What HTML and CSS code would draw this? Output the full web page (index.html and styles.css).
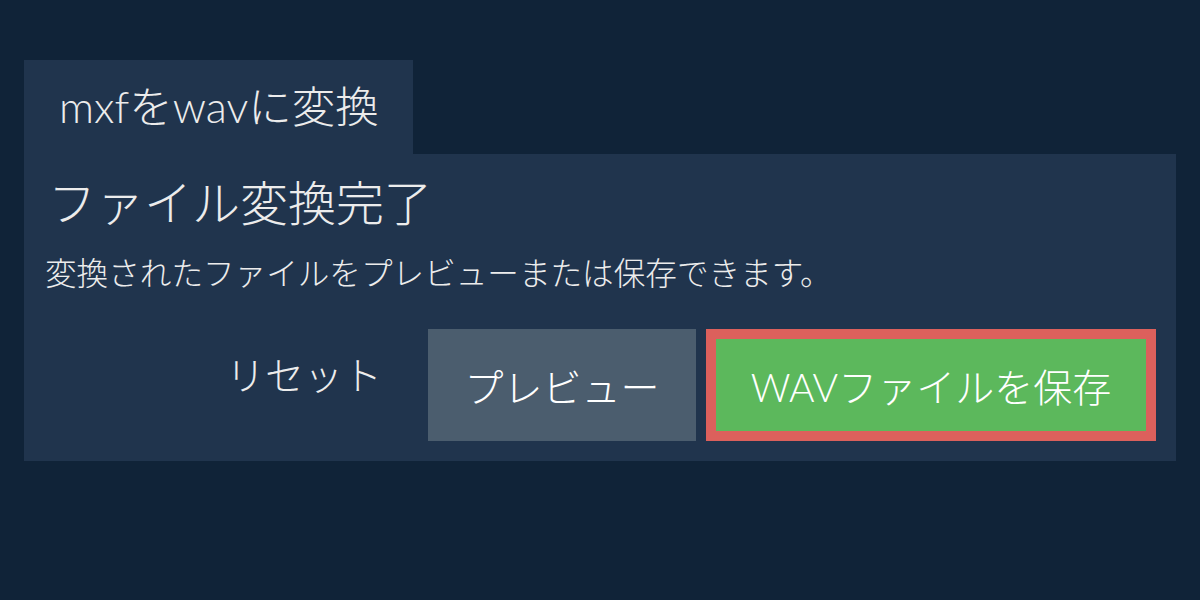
FILE: index.html
```html
<!DOCTYPE html>
<html lang="ja">
<head>
<meta charset="utf-8">
<link rel="stylesheet" href="styles.css">
</head>
<body>
<div class="wrap">
  <div class="tab">mxfをwavに変換</div>
  <div class="panel">
    <h1 class="title">ファイル変換完了</h1>
    <p class="desc">変換されたファイルをプレビューまたは保存できます。</p>
    <div class="actions">
      <button class="btn reset">リセット</button>
      <button class="btn preview">プレビュー</button>
      <button class="btn save">WAVファイルを保存</button>
    </div>
  </div>
</div>
</body>
</html>
```
FILE: styles.css
```css
html, body {
  margin: 0;
  padding: 0;
  background: #102338;
  width: 1200px;
  height: 600px;
  overflow: hidden;
}
body {
  font-family: "Lato", "Noto Sans CJK JP", sans-serif;
  font-weight: 300;
  color: #ececec;
}
.wrap {
  margin: 60px 24px 0 24px;
  display: flex;
  flex-direction: column;
  align-items: flex-start;
}
.tab {
  background: #20344d;
  height: 94px;
  box-sizing: border-box;
  padding: 0 34px 0 35px;
  display: flex;
  align-items: center;
  font-size: 43.5px;
  line-height: 1;
}
.panel {
  background: #20344d;
  width: 1152px;
  box-sizing: border-box;
  padding: 18px 20px 20px 24px;
  display: flex;
  flex-direction: column;
}
.title {
  margin: 0;
  font-weight: 300;
  font-size: 48px;
  line-height: 62px;
}
.desc {
  margin: 15px 0 0 -3px;
  font-size: 31.6px;
  line-height: 48px;
}
.actions {
  margin-top: 32px;
  display: flex;
  justify-content: flex-end;
  gap: 10px;
}
.btn {
  font-family: "Lato", "Noto Sans CJK JP", sans-serif;
  font-weight: 300;
  font-size: 39px;
  color: #ffffff;
  border: none;
  height: 112px;
  box-sizing: border-box;
  cursor: pointer;
}
.reset {
  background: transparent;
  color: #ececec;
  padding: 0 36px 0 30px;
  margin-top: -12px;
}
.preview {
  background: #4b5d6e;
  width: 268px;
  padding: 0;
}
.save {
  background: #5cb85c;
  border: 10px solid #dc605c;
  width: 450px;
  padding: 0;
}
```
